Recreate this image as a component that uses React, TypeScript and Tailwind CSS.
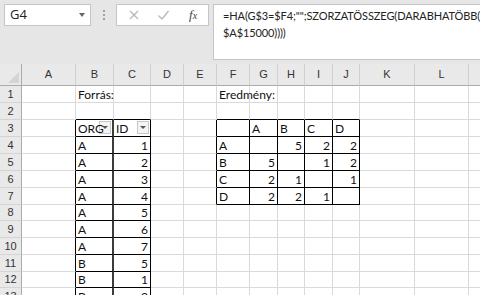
import React from 'react';

// Column letters and pixel widths (each width includes the right gridline)
const COLS = ['A', 'B', 'C', 'D', 'E', 'F', 'G', 'H', 'I', 'J', 'K', 'L', 'M'];
const COL_W = [54, 38, 37, 33, 33, 33, 28, 27, 28, 27, 55, 54, 40];

// Row heights (include bottom gridline)
const ROW_H: Record<number, string> = {
  1: 'h-[17px]', 2: 'h-[17px]', 3: 'h-[17px]', 4: 'h-[17px]', 5: 'h-[17px]',
  6: 'h-[17px]', 7: 'h-[17px]', 8: 'h-[16px]', 9: 'h-[17px]', 10: 'h-[17px]',
  11: 'h-[17px]', 12: 'h-[16px]', 13: 'h-[17px]',
};

const ROWS = Array.from({ length: 13 }, (_, i) => i + 1);

type Cell = { v: string; num?: boolean };

const DATA: Record<string, Cell> = {
  B1: { v: 'Forrás:' },
  F1: { v: 'Eredmény:' },
  B3: { v: 'ORG' },
  C3: { v: 'ID' },
  G3: { v: 'A' }, H3: { v: 'B' }, I3: { v: 'C' }, J3: { v: 'D' },
  F4: { v: 'A' }, H4: { v: '5', num: true }, I4: { v: '2', num: true }, J4: { v: '2', num: true },
  F5: { v: 'B' }, G5: { v: '5', num: true }, I5: { v: '1', num: true }, J5: { v: '2', num: true },
  F6: { v: 'C' }, G6: { v: '2', num: true }, H6: { v: '1', num: true }, J6: { v: '1', num: true },
  F7: { v: 'D' }, G7: { v: '2', num: true }, H7: { v: '2', num: true }, I7: { v: '1', num: true },
};

// source list B4:C13
const SOURCE: [string, string][] = [
  ['A', '1'], ['A', '2'], ['A', '3'], ['A', '4'], ['A', '5'],
  ['A', '6'], ['A', '7'], ['B', '5'], ['B', '1'], ['B', '2'],
];
SOURCE.forEach(([org, id], i) => {
  DATA[`B${i + 4}`] = { v: org };
  DATA[`C${i + 4}`] = { v: id, num: true };
});

// is column c (1-based, A=1) / row r part of one of the bordered tables
const inTable = (c: number, r: number) =>
  (c >= 2 && c <= 3 && r >= 3 && r <= 13) || (c >= 6 && c <= 10 && r >= 3 && r <= 7);

function FilterButton() {
  return (
    <div className="absolute right-[1px] top-[1px] w-[12px] h-[13px] bg-[#f4f4f4] border border-[#c8c8c8] flex items-center justify-center">
      <div className="w-0 h-0 border-l-[3px] border-r-[3px] border-t-[3px] border-l-transparent border-r-transparent border-t-[#555]" />
    </div>
  );
}

function SheetCell({ c, r }: { c: number; r: number }) {
  const key = `${COLS[c - 1]}${r}`;
  const cell = DATA[key];
  const rightDark = inTable(c, r) || inTable(c + 1, r);
  const bottomDark = inTable(c, r) || inTable(c, r + 1);
  const thickMid = c === 2 && r >= 3 && r <= 13;

  return (
    <div
      className={`relative bg-white box-border flex items-end overflow-visible whitespace-nowrap
        ${ROW_H[r]}
        ${thickMid ? 'border-r-2 border-r-[#3c3c3c]' : rightDark ? 'border-r border-r-black' : 'border-r border-r-[#dadada]'}
        ${bottomDark ? 'border-b border-b-black' : 'border-b border-b-[#dadada]'}
        ${cell?.num ? 'justify-end pr-[2px]' : 'justify-start pl-[2px]'}`}
    >
      {cell && <span className="leading-[15px] text-[12px] text-[#111] relative z-10">{cell.v}</span>}
      {r === 3 && (c === 2 || c === 3) && <FilterButton />}
    </div>
  );
}

export default function App() {
  const gridCols = 'grid-cols-[22px_54px_38px_37px_33px_33px_33px_28px_27px_28px_27px_55px_54px_40px]';

  return (
    <div className="w-[480px] h-[295px] overflow-hidden bg-[#e6e6e6] font-['Lato','Liberation_Sans',sans-serif]">
      {/* Formula bar */}
      <div className="relative h-[64px] w-[600px]">
        <div className="flex items-start gap-0 pt-[4px] pl-[4px]">
          <div className="w-[87px] h-[22px] bg-white border border-[#c6c6c6] flex items-center justify-between px-[5px]">
            <span className="text-[13px] text-[#222] font-['Open_Sans','Liberation_Sans',sans-serif]">G4</span>
            <div className="w-0 h-0 border-l-[3px] border-r-[3px] border-t-[4px] border-l-transparent border-r-transparent border-t-[#666]" />
          </div>
          <div className="w-[25px] h-[22px] flex flex-col items-center justify-center gap-[2px]">
            <div className="w-[2px] h-[2px] bg-[#a0a0a0]" />
            <div className="w-[2px] h-[2px] bg-[#a0a0a0]" />
            <div className="w-[2px] h-[2px] bg-[#a0a0a0]" />
          </div>
          <div className="w-[93px] h-[22px] bg-white border border-[#c6c6c6] flex items-center">
            <svg width="12" height="12" viewBox="0 0 12 12" className="ml-[11px]">
              <path d="M2 2L10 10M10 2L2 10" stroke="#b8b8b8" strokeWidth="1.3" />
            </svg>
            <svg width="13" height="12" viewBox="0 0 13 12" className="ml-[17px]">
              <path d="M1.5 6.5L5 10L11.5 2" stroke="#b8b8b8" strokeWidth="1.3" fill="none" />
            </svg>
            <span className="ml-[19px] text-[13px] italic text-[#444] font-['Liberation_Serif',serif]">
              f<span className="text-[10px]">x</span>
            </span>
          </div>
          <div className="ml-[4px] w-[300px] h-[56px] bg-white border border-[#c6c6c6] pl-[9px] pt-[2px]">
            <div className="text-[11px] leading-[17px] text-[#222] whitespace-nowrap tracking-[-0.1px]">
              =HA(G$3=$F4;"";SZORZATÖSSZEG(DARABHATÖBB($B$2:$B$15000;G$3;$C$2:$C$15000;$C$2:$C$15000)/
            </div>
            <div className="text-[11px] leading-[17px] text-[#222] whitespace-nowrap tracking-[-0.1px]">
              $A$15000))))
            </div>
          </div>
        </div>
      </div>

      {/* Sheet */}
      <div className={`grid ${gridCols} w-[550px]`}>
        {/* corner */}
        <div className="h-[22px] bg-[#e9e9e9] border-r border-r-[#ababab] border-b border-b-[#ababab] flex items-end justify-end pr-[2px] pb-[2px]">
          <div className="w-0 h-0 border-l-[11px] border-t-[11px] border-l-transparent border-t-transparent border-b-0 border-r-0 relative">
            <div className="absolute -left-[11px] -top-[11px] w-0 h-0 border-l-[11px] border-l-transparent border-b-[11px] border-b-[#d4d4d4]" />
          </div>
        </div>
        {COLS.map((c, i) => (
          <div
            key={c}
            className="h-[22px] bg-[#e9e9e9] border-r border-r-[#d0d0d0] border-b border-b-[#ababab] flex items-center justify-center text-[11px] text-[#333] font-['Liberation_Sans',sans-serif]"
            style={{ width: COL_W[i] }}
          >
            {c === 'M' ? '' : c}
          </div>
        ))}

        {ROWS.map((r) => (
          <React.Fragment key={r}>
            <div
              className={`${ROW_H[r]} bg-[#e9e9e9] border-r border-r-[#ababab] border-b border-b-[#d4d4d4] flex items-center justify-center text-[11px] text-[#333] font-['Liberation_Sans',sans-serif]`}
            >
              {r}
            </div>
            {COLS.map((_, ci) => (
              <SheetCell key={ci} c={ci + 1} r={r} />
            ))}
          </React.Fragment>
        ))}
      </div>
    </div>
  );
}
